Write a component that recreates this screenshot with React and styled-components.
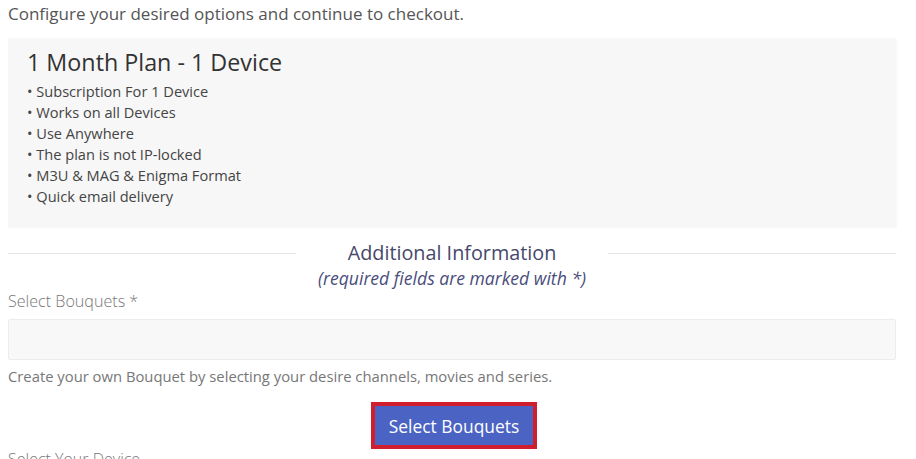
import React from 'react';
import styled, {createGlobalStyle} from 'styled-components';

const GlobalStyle = createGlobalStyle`
  html, body {
    margin: 0;
    padding: 0;
    background: #fff;
    overflow: hidden;
  }
  body {
    font-family: "Open Sans", "Liberation Sans", sans-serif;
  }
`

const Page = styled.div`
  width: 888px;
  padding: 0 20px 0 8px;
`

const Intro = styled.p`
  margin: 0;
  padding-top: 2px;
  font-size: 17px;
  line-height: 24px;
  color: #555;
`

const PlanBox = styled.div`
  margin-top: 12px;
  height: 189px;
  box-sizing: border-box;
  padding: 8px 19px;
  background: #f7f7f7;
  box-shadow: 1px 1px 2px rgba(0, 0, 0, 0.04);
`

const PlanTitle = styled.h3`
  margin: 0 0 3px;
  font-size: 23.3px;
  font-weight: 400;
  line-height: 32px;
  color: #333;
`

const Features = styled.ul`
  margin: 0;
  padding: 0;
  list-style: none;
`

const Feature = styled.li`
  font-size: 14.6px;
  line-height: 21px;
  color: #444;
  &:before {
    content: "• ";
  }
`

const SectionHead = styled.div`
  margin-top: 13px;
  display: grid;
  grid-template-columns: 1fr auto 1fr;
  align-items: center;
  column-gap: 52px;
`

const Rule = styled.hr`
  margin: 0;
  border: 0;
  border-top: 1px solid #e6e6e6;
`

const SectionTitle = styled.h4`
  margin: 0;
  font-size: 19.8px;
  font-weight: 400;
  line-height: 26px;
  color: #46486b;
`

const Note = styled.div`
  text-align: center;
  font-size: 17.6px;
  font-style: italic;
  line-height: 24px;
  color: #4a4d7c;
`

const Label = styled.label`
  display: block;
  margin-top: 0;
  font-size: 16.1px;
  font-weight: 300;
  line-height: 22px;
  color: #777;
`

const Field = styled.div`
  margin-top: 7px;
  height: 41px;
  box-sizing: border-box;
  background: #f8f8f8;
  border: 1px solid #ececec;
  border-radius: 2px;
`

const Help = styled.p`
  margin: 6px 0 0;
  font-size: 14.8px;
  line-height: 20px;
  color: #777;
`

const ButtonRow = styled.div`
  margin-top: 16px;
  display: flex;
  justify-content: center;
  padding-left: 4px;
`

const BlueButton = styled.button`
  width: 166px;
  height: 47px;
  box-sizing: border-box;
  border: 4px solid #d11e2e;
  background: #4b63c3;
  color: #fff;
  font-family: inherit;
  font-size: 17.4px;
  line-height: 20px;
  padding: 0;
  cursor: pointer;
`

const Cutoff = styled.div`
  margin-top: 0;
  font-size: 16px;
  font-weight: 300;
  line-height: 20px;
  color: #777;
`

const features = [
  'Subscription For 1 Device',
  'Works on all Devices',
  'Use Anywhere',
  'The plan is not IP-locked',
  'M3U & MAG & Enigma Format',
  'Quick email delivery',
];

export default function App() {
  return (
    <Page>
      <GlobalStyle />
      <Intro>Configure your desired options and continue to checkout.</Intro>
      <PlanBox>
        <PlanTitle>1 Month Plan - 1 Device</PlanTitle>
        <Features>
          {features.map(f => <Feature key={f}>{f}</Feature>)}
        </Features>
      </PlanBox>
      <SectionHead>
        <Rule />
        <SectionTitle>Additional Information</SectionTitle>
        <Rule />
      </SectionHead>
      <Note>(required fields are marked with *)</Note>
      <Label>Select Bouquets *</Label>
      <Field />
      <Help>Create your own Bouquet by selecting your desire channels, movies and series.</Help>
      <ButtonRow>
        <BlueButton>Select Bouquets</BlueButton>
      </ButtonRow>
      <Cutoff>Select Your Device</Cutoff>
    </Page>
  );
}
